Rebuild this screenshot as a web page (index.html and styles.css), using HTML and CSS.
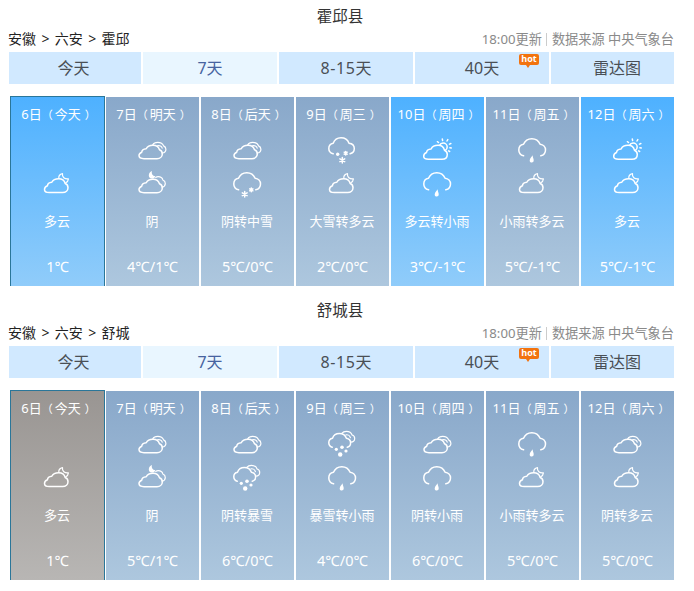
FILE: index.html
```
<!DOCTYPE html>
<html lang="zh-CN">
<head>
    <meta charset="UTF-8">
    <meta name="viewport" content="width=device-width, initial-scale=1.0">
    <title>天气预报</title>
    <link rel="stylesheet" href="styles.css">
</head>
<body>
    <svg class="icon-defs" aria-hidden="true">
        <symbol id="cloud" viewBox="0 0 30 30">
            <path d="M7 23.7H20C23.1 23.7 25.3 21.6 25.3 18.9C25.3 16.9 24.2 15.4 22.5 14.8C21.7 12 19.2 10.2 16 10.2C12.8 10.2 10.3 11.4 9.2 13.7C6.6 13.9 4.9 15.2 4.7 17.2C3 17.9 2 19.1 2 20.6C2 22.6 4 23.7 7 23.7Z"/>
        </symbol>
        <symbol id="overcast" viewBox="0 0 30 30">
            <use href="#cloud"/>
            <path class="thin" d="M15.8 9.8C16.6 8.2 18.4 7.3 20.7 7.3C23.5 7.3 25.8 8.7 26.6 10.9C28.1 11.6 28.9 12.8 28.9 14.2C28.9 16.3 27.4 17.8 25.2 18M20.6 10.9C22.5 10.2 24.8 11.2 25.2 13.2"/>
        </symbol>
        <symbol id="overcast-night" viewBox="0 0 30 30">
            <use href="#cloud"/>
            <path class="thin" d="M18.7 8.4C19.4 7.9 20.3 7.7 21.2 7.7C23.5 7.7 25.3 9 25.9 11C27.4 11.6 28.3 12.9 28.3 14.5C28.3 16.4 27.1 17.8 25.2 18.2"/>
            <path class="fill" d="M14.9 2C14.2 4.7 15.4 6.9 18.4 7.2C17.8 8.7 16.5 9.5 14.9 9.5C13.1 9.5 11.8 8.3 11.8 6.5C11.8 4.6 13 2.8 14.9 2Z"/>
        </symbol>
        <symbol id="cloudy-night" viewBox="0 0 30 30">
            <path d="M7.2 23.5H20.6C23.8 23.5 26 21.5 26 18.7C26 16.8 25 15.2 23.2 14.5C22.4 11.6 19.9 9.8 16.7 9.8C13.5 9.8 10.9 11 9.8 13.3C7.2 13.5 5.6 14.9 5.4 16.8C3.6 17.5 2.5 18.8 2.5 20.4C2.5 22.4 4.3 23.5 7.2 23.5Z"/>
            <path class="thin" d="M16.8 9.3C16.6 7.1 17.9 5.3 20.5 4.7C19.9 8 22.6 10.4 26.4 9.9C26.2 11.9 25.2 13.2 23.8 13.8"/>
        </symbol>
        <symbol id="cloudy-day" viewBox="0 0 30 30">
            <path d="M6.4 24.2H20C23.2 24.2 25.3 22.2 25.3 19.4C25.3 17.4 24.2 16 22.5 15.2C21.7 12.2 19.2 10.3 16 10.3C12.8 10.3 10.2 11.6 9.1 14C6.4 14.2 4.7 15.5 4.5 17.5C2.8 18.2 1.7 19.5 1.7 21.2C1.7 23 3.5 24.2 6.4 24.2Z"/>
            <path d="M17.6 10.3C18.2 8.9 19.5 8 21.1 8C23.4 8 25.2 9.8 25.2 12C25.2 13.5 24.4 14.8 23.2 15.4M20.6 5.5L20.3 4M25 6L25.8 4.6M27.5 9.1L28.9 8.5M27.9 12.7L29.3 13M26.6 15.9L27.6 16.5M16.5 7.5L15.4 6.7"/>
        </symbol>
        <symbol id="rain-cloud" viewBox="0 0 30 30">
            <path d="M6.6 20.8C3.7 20 1.8 17.7 1.8 14.9C1.8 12 3.8 9.8 6.5 9.3C7.9 5.9 11 3.7 14.8 3.7C18.6 3.7 21.8 6 23.1 9.3C26.2 9.6 28.5 12 28.5 15C28.5 17.9 26.5 20.2 23.8 20.8"/>
        </symbol>
        <symbol id="light-rain" viewBox="0 0 30 30">
            <use href="#rain-cloud"/>
            <path class="fill" d="M15.6 20.2C14.6 21.9 12.7 23.5 12.7 25.4C12.7 26.7 13.5 27.5 14.7 27.5C16 27.5 16.7 26.5 16.7 25.2C16.7 23.5 15.7 22.3 15.6 20.2Z"/>
        </symbol>
        <symbol id="moderate-snow" viewBox="0 0 30 30">
            <use href="#rain-cloud"/>
            <path d="M12.7 22.6V28M10.3 23.9L15.1 26.7M10.3 26.7L15.1 23.9M19.3 18.9V22.7M17.7 19.8L20.9 21.8M17.7 21.8L20.9 19.8"/>
        </symbol>
        <symbol id="heavy-snow" viewBox="0 0 30 30">
            <path d="M6.2 18.8C3.6 18.1 1.8 16.2 1.8 13.5C1.8 10.9 3.7 8.7 6.2 8.3C7.4 4.9 10.3 2.7 14 2.7C17.7 2.7 20.8 4.9 22 8.2C25.1 8.5 27.3 10.7 27.3 13.6C27.3 16.3 25.6 18.2 23.1 18.8"/>
            <path d="M15.3 22.5V27.9M12.9 23.8L17.7 26.6M12.9 26.6L17.7 23.8M18.7 16.4V20M17.2 17.2L20.2 19.2M17.2 19.2L20.2 17.2"/>
            <circle class="fill" cx="10.7" cy="19.3" r="1.7"/>
        </symbol>
        <symbol id="blizzard" viewBox="0 0 30 30">
            <path d="M5.2 18.2C3.1 17.5 1.8 15.8 1.8 13.7C1.8 11.4 3.3 9.6 5.5 9.2C6.5 6.3 9.1 4.5 12.3 4.5C15.6 4.5 18.4 6.4 19.4 9.3C21.8 9.7 23.6 11.5 23.6 13.9C23.6 16 22.3 17.7 20.3 18.2"/>
            <path class="thin" d="M14.8 4.3C15.8 3 17.6 2.3 19.5 2.3C22 2.3 24.3 3.8 25.1 6C26.7 6.5 27.7 7.9 27.7 9.4C27.7 11.4 26.1 12.9 23.8 13.1M19 5.8C21 5.5 23 6.8 23.4 8.7"/>
            <circle class="fill" cx="9.3" cy="20.3" r="1.6"/>
            <circle class="fill" cx="15" cy="18.3" r="1.8"/>
            <circle class="fill" cx="19" cy="22" r="1.6"/>
            <circle class="fill" cx="13.2" cy="25.5" r="2.2"/>
        </symbol>
    </svg>

    <div class="forecast">
        <h2 class="county">霍邱县</h2>
        <div class="info">
            <div class="crumbs">安徽<span class="arrow">&gt;</span>六安<span class="arrow">&gt;</span>霍邱</div>
            <div class="source">18:00更新<span class="line"></span>数据来源 中央气象台</div>
        </div>
        <div class="tabs">
            <a class="tab">今天</a>
            <a class="tab active">7天</a>
            <a class="tab"><span class="range">8-15</span>天</a>
            <a class="tab">40天<span class="hot">hot</span></a>
            <a class="tab">雷达图</a>
        </div>
        <div class="days">
            <div class="day sunny today">
                <div class="date">6日<span class="open">（</span>今天<span class="close">）</span></div>
                <div class="icon"></div>
                <svg class="icon"><use href="#cloudy-night"/></svg>
                <div class="weather">多云</div>
                <div class="temp">1℃</div>
            </div>
            <div class="day">
                <div class="date">7日<span class="open">（</span>明天<span class="close">）</span></div>
                <svg class="icon"><use href="#overcast"/></svg>
                <svg class="icon"><use href="#overcast-night"/></svg>
                <div class="weather">阴</div>
                <div class="temp">4℃/1℃</div>
            </div>
            <div class="day">
                <div class="date">8日<span class="open">（</span>后天<span class="close">）</span></div>
                <svg class="icon"><use href="#overcast"/></svg>
                <svg class="icon"><use href="#moderate-snow"/></svg>
                <div class="weather">阴转中雪</div>
                <div class="temp">5℃/0℃</div>
            </div>
            <div class="day">
                <div class="date">9日<span class="open">（</span>周三<span class="close">）</span></div>
                <svg class="icon"><use href="#heavy-snow"/></svg>
                <svg class="icon"><use href="#cloudy-night"/></svg>
                <div class="weather">大雪转多云</div>
                <div class="temp">2℃/0℃</div>
            </div>
            <div class="day sunny">
                <div class="date">10日<span class="open">（</span>周四<span class="close">）</span></div>
                <svg class="icon"><use href="#cloudy-day"/></svg>
                <svg class="icon"><use href="#light-rain"/></svg>
                <div class="weather">多云转小雨</div>
                <div class="temp">3℃/-1℃</div>
            </div>
            <div class="day">
                <div class="date">11日<span class="open">（</span>周五<span class="close">）</span></div>
                <svg class="icon"><use href="#light-rain"/></svg>
                <svg class="icon"><use href="#cloudy-night"/></svg>
                <div class="weather">小雨转多云</div>
                <div class="temp">5℃/-1℃</div>
            </div>
            <div class="day sunny">
                <div class="date">12日<span class="open">（</span>周六<span class="close">）</span></div>
                <svg class="icon"><use href="#cloudy-day"/></svg>
                <svg class="icon"><use href="#cloudy-night"/></svg>
                <div class="weather">多云</div>
                <div class="temp">5℃/-1℃</div>
            </div>
        </div>
    </div>

    <div class="forecast">
        <h2 class="county">舒城县</h2>
        <div class="info">
            <div class="crumbs">安徽<span class="arrow">&gt;</span>六安<span class="arrow">&gt;</span>舒城</div>
            <div class="source">18:00更新<span class="line"></span>数据来源 中央气象台</div>
        </div>
        <div class="tabs">
            <a class="tab">今天</a>
            <a class="tab active">7天</a>
            <a class="tab"><span class="range">8-15</span>天</a>
            <a class="tab">40天<span class="hot">hot</span></a>
            <a class="tab">雷达图</a>
        </div>
        <div class="days">
            <div class="day gray today">
                <div class="date">6日<span class="open">（</span>今天<span class="close">）</span></div>
                <div class="icon"></div>
                <svg class="icon"><use href="#cloudy-night"/></svg>
                <div class="weather">多云</div>
                <div class="temp">1℃</div>
            </div>
            <div class="day">
                <div class="date">7日<span class="open">（</span>明天<span class="close">）</span></div>
                <svg class="icon"><use href="#overcast"/></svg>
                <svg class="icon"><use href="#overcast-night"/></svg>
                <div class="weather">阴</div>
                <div class="temp">5℃/1℃</div>
            </div>
            <div class="day">
                <div class="date">8日<span class="open">（</span>后天<span class="close">）</span></div>
                <svg class="icon"><use href="#overcast"/></svg>
                <svg class="icon"><use href="#blizzard"/></svg>
                <div class="weather">阴转暴雪</div>
                <div class="temp">6℃/0℃</div>
            </div>
            <div class="day">
                <div class="date">9日<span class="open">（</span>周三<span class="close">）</span></div>
                <svg class="icon"><use href="#blizzard"/></svg>
                <svg class="icon"><use href="#light-rain"/></svg>
                <div class="weather">暴雪转小雨</div>
                <div class="temp">4℃/0℃</div>
            </div>
            <div class="day">
                <div class="date">10日<span class="open">（</span>周四<span class="close">）</span></div>
                <svg class="icon"><use href="#overcast"/></svg>
                <svg class="icon"><use href="#light-rain"/></svg>
                <div class="weather">阴转小雨</div>
                <div class="temp">6℃/0℃</div>
            </div>
            <div class="day">
                <div class="date">11日<span class="open">（</span>周五<span class="close">）</span></div>
                <svg class="icon"><use href="#light-rain"/></svg>
                <svg class="icon"><use href="#cloudy-night"/></svg>
                <div class="weather">小雨转多云</div>
                <div class="temp">5℃/0℃</div>
            </div>
            <div class="day">
                <div class="date">12日<span class="open">（</span>周六<span class="close">）</span></div>
                <svg class="icon"><use href="#overcast"/></svg>
                <svg class="icon"><use href="#cloudy-night"/></svg>
                <div class="weather">阴转多云</div>
                <div class="temp">5℃/0℃</div>
            </div>
        </div>
    </div>
</body>
</html>
```
FILE: styles.css
```
* {
    box-sizing: border-box;
}

body {
    margin: 0;
    background-color: #fff;
    color: #333;
    font-family: "Noto Sans", "Noto Sans CJK SC", sans-serif;
}

.icon-defs {
    display: block;
    width: 0;
    height: 0;
}

.forecast {
    width: 674px;
    height: 294px;
    padding: 5px 0 0 9px;
}

.county {
    height: 23px;
    margin: 0 0 0 -3px;
    font-size: 15.5px;
    font-weight: normal;
    line-height: 22px;
    text-align: center;
}

.info {
    display: flex;
    justify-content: space-between;
    height: 24px;
    line-height: 22px;
    white-space: nowrap;
}

.crumbs {
    margin-left: -1px;
    color: #222;
    font-size: 14px;
}

.arrow {
    margin: 0 5.4px;
}

.source {
    color: #8a8a8a;
    font-size: 13.2px;
}

.line {
    display: inline-block;
    width: 1px;
    height: 13px;
    margin: 0 5px 0 4px;
    background-color: #ccc;
    vertical-align: -2px;
}

.tabs {
    display: grid;
    grid-template-columns: 132px 134px 134px 134px 123px;
    gap: 2px;
    height: 32px;
}

.tab {
    position: relative;
    height: 32px;
    background-color: #d1e9ff;
    color: #4a4f55;
    font-size: 16px;
    line-height: 33px;
    text-align: center;
}

.tab:first-child {
    padding-right: 3px;
}

.tab:last-child {
    padding-left: 9px;
}

.tab.active {
    background-color: #e9f6ff;
    color: #4763a0;
}

.range {
    letter-spacing: 0.6px;
}

.hot {
    position: absolute;
    top: 2px;
    right: 10px;
    width: 20px;
    height: 11px;
    border-radius: 2px;
    background-color: #f2730f;
    color: #fff;
    font-family: "Open Sans", sans-serif;
    font-size: 9px;
    font-weight: bold;
    line-height: 10px;
}

.hot::after {
    content: "";
    position: absolute;
    top: 11px;
    left: 7px;
    border: 2px solid transparent;
    border-top: 3px solid #f2730f;
    border-bottom: 0;
}

.days {
    display: flex;
    gap: 2px;
    margin: 12px 0 0 1px;
}

.day {
    width: 93px;
    height: 189px;
    margin-top: 1px;
    padding-top: 5px;
    background: linear-gradient(#89a8ca, #adc7de);
    color: #fff;
    font-size: 13px;
    text-align: center;
    white-space: nowrap;
}

.day.sunny {
    background: linear-gradient(#4eb1ff, #90ccfa);
}

.day.gray {
    background: linear-gradient(#999592, #b8b6b4);
}

.day.today {
    width: 95px;
    height: 190px;
    margin: 0 -1px 0 0;
    border: 1px solid #2a7699;
    border-bottom: 0;
}

.date {
    height: 24px;
    margin-bottom: 9px;
    line-height: 24px;
}

/* 括号略小，与文字留出间距 */
.open,
.close {
    font-size: 11px;
    line-height: 1;
}

.open {
    margin-right: 2px;
}

.close {
    margin: 0 -2px 0 4px;
}

.icon {
    display: block;
    width: 30px;
    height: 30px;
    margin: 0 0 4px 31px;
    fill: none;
    stroke: #fff;
    stroke-width: 1.5;
    stroke-linecap: round;
    stroke-linejoin: round;
}

.thin {
    stroke-width: 1.2;
}

.fill {
    fill: #fff;
    stroke: none;
}

.weather {
    height: 24px;
    margin: 10px 1px 0 0;
    line-height: 24px;
}

.temp {
    height: 24px;
    margin: 21px 0 0 0;
    font-size: 14.5px;
    line-height: 24px;
}
```
